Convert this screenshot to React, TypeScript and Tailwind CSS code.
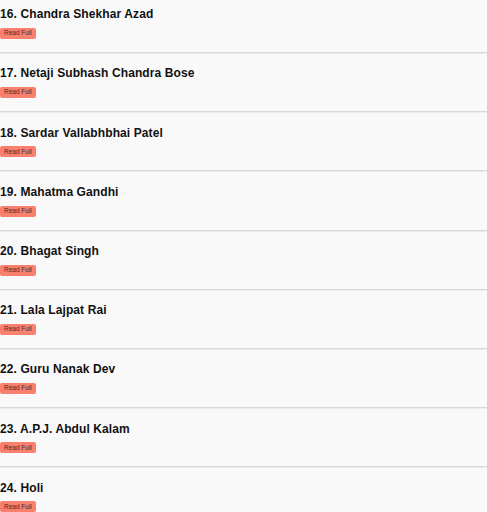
import React from 'react';

const festivals = [
  'Chandra Shekhar Azad',
  'Netaji Subhash Chandra Bose',
  'Sardar Vallabhbhai Patel',
  'Mahatma Gandhi',
  'Bhagat Singh',
  'Lala Lajpat Rai',
  'Guru Nanak Dev',
  'A.P.J. Abdul Kalam',
  'Holi',
];

const App = () => {
  return (
    <div className="min-h-screen bg-[#f9f9f9] font-['Liberation_Sans',Arial,sans-serif] text-[#111]">
      {festivals.map((name, i) => (
        <div key={name} className={i === 0 ? 'pt-[6.3px]' : 'pt-[11.5px]'}>
          <h3 className="text-[12px] leading-[16px] font-bold tracking-[0.1px]">
            {16 + i}. {name}
          </h3>
          <button className="mt-[5.7px] flex h-[11px] items-center rounded-[2px] bg-[#f97f6f] px-[4px] text-[6.5px] leading-none text-[#4a2a26]">
            Read Full
          </button>
          <div className="mt-[13px] h-[2px] border-t border-b border-t-[#d8d8d8] border-b-[#ececec]" />
        </div>
      ))}
    </div>
  );
};

export default App;
